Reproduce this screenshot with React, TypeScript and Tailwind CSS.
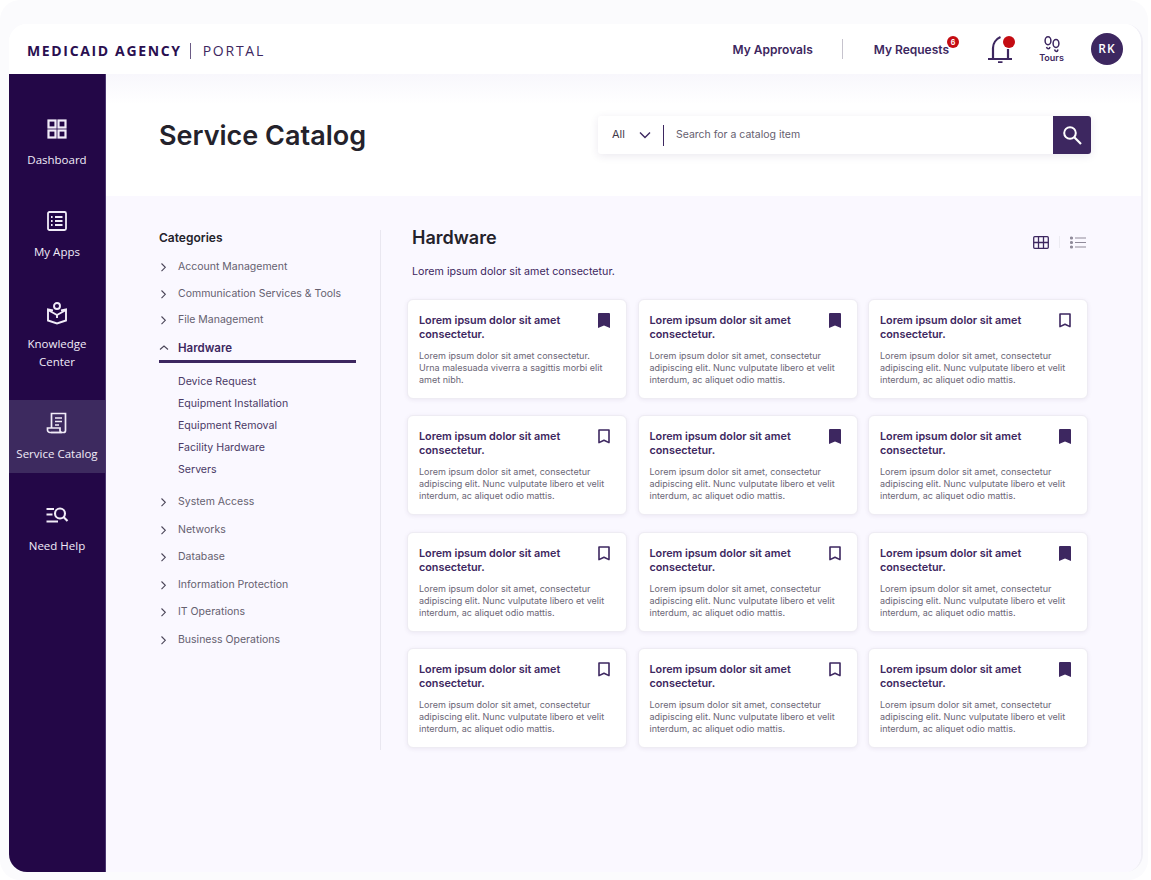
import React from "react";

const P = "#3d2760";

function Chevron({ up = false }: { up?: boolean }) {
  return (
    <svg width="10" height="10" viewBox="0 0 10 10" fill="none" stroke="#4a4558" strokeWidth="1.1" className="shrink-0">
      {up ? <path d="M1 6.5 5 3l4 3.5" /> : <path d="M2.500 1.500l3.800 3.800-3.800 3.800" />}
    </svg>
  );
}

function Bookmark({ filled }: { filled: boolean }) {
  return (
    <svg width="12" height="15" viewBox="0 0 12 15" className="-mt-[1px] shrink-0" fill={filled ? P : "none"} stroke={P} strokeWidth={filled ? 0 : 1.6}>
      {filled ? <path d="M0 1a1 1 0 0 1 1-1h10a1 1 0 0 1 1 1v14l-6-2.6L0 15z" /> : <path d="M1 1h10v12.600l-5-2.400-5 2.400z" strokeLinejoin="round" />}
    </svg>
  );
}

const iconProps = { width: 24, height: 24, viewBox: "0 0 24 24", fill: "none", stroke: "#f1ecf8", strokeWidth: 1.8 };

const navIcons: Record<string, React.ReactNode> = {
  Dashboard: (
    <svg {...iconProps} strokeWidth={2.2}>
      <rect x="3.500" y="3.500" width="7" height="7" />
      <rect x="13.500" y="3.500" width="7" height="7" />
      <rect x="3.500" y="13.500" width="7" height="7" />
      <rect x="13.500" y="13.500" width="7" height="7" />
    </svg>
  ),
  Apps: (
    <svg {...iconProps}>
      <rect x="3" y="3" width="18" height="18" rx="1.500" />
      <path d="M10 8h7.500M10 12h7.500M10 16h7.500" />
      <path d="M6 8h1.600M6 12h1.600M6 16h1.600" />
    </svg>
  ),
  Knowledge: (
    <svg {...iconProps} strokeWidth={1.900}>
      <circle cx="12" cy="5" r="3" />
      <path d="M8 9.500 3 8.500V19.500l9 3 9-3V8.500l-5 1" />
      <path d="M3 9l9 5 9-5M12 14v3" />
    </svg>
  ),
  Catalog: (
    <svg {...iconProps} strokeWidth={1.700}>
      <path d="M6.500 17V2.500h14V19.500a2 2 0 0 1-2 2H6" />
      <path d="M2.500 17h12.500v2.500a2 2 0 0 0 2 2H5a2.500 2.500 0 0 1-2.500-2.500z" />
      <path d="M10 7h7M10 10.500h7M10 14h4" />
    </svg>
  ),
  Help: (
    <svg {...iconProps}>
      <path d="M1.500 6H9M1.500 11.500h6M1.500 18.500H13" />
      <circle cx="15" cy="10.500" r="5" strokeWidth="2.100" />
      <path d="M18.500 14l4 4" strokeWidth="2.100" />
    </svg>
  ),
};

function NavItem({ icon, label, active = false }: { icon: string; label: React.ReactNode; active?: boolean }) {
  return (
    <div className={`flex min-h-[73px] w-[96px] flex-col items-center pt-[11px] pb-[10px] ${active ? "bg-[#3d2a5f]" : ""}`}>
      <div className="flex h-[24px] items-center justify-center">{navIcons[icon]}</div>
      <div className="mt-[10px] text-center font-['Open_Sans'] text-[11.500px] leading-[18px] text-[#f1ecf8]">{label}</div>
    </div>
  );
}

function Cat({ label, className }: { label: string; className: string }) {
  return (
    <div className={`flex items-center ${className}`}>
      <div className="flex w-[19px] justify-start">
        <Chevron />
      </div>
      <span className="text-[10.500px] leading-[16px] text-[#65606f]">{label}</span>
    </div>
  );
}

function Card({ first, filled }: { first?: boolean; filled: boolean }) {
  return (
    <div className="h-[100px] rounded-[6px] border border-[#eeecf3] bg-white pt-[14px] pr-[16px] pl-[11px] shadow-[0_1px_4px_rgba(61,39,96,0.08)]">
      <div className="flex items-start justify-between">
        <div className="w-[160px] text-[10.800px] leading-[14px] font-semibold text-[#3d2760]">Lorem ipsum dolor sit amet consectetur.</div>
        <Bookmark filled={filled} />
      </div>
      <p className="mt-[8px] text-[9px] leading-[12px] text-[#6b6676]">
        {first
          ? "Lorem ipsum dolor sit amet consectetur. Urna malesuada viverra a sagittis morbi elit amet nibh."
          : "Lorem ipsum dolor sit amet, consectetur adipiscing elit. Nunc vulputate libero et velit interdum, ac aliquet odio mattis."}
      </p>
    </div>
  );
}

const fills = [true, true, false, false, true, true, false, false, true, false, false, true];

export default function App() {
  return (
    <div className="h-[880px] w-[1151px] overflow-hidden bg-white font-['Inter','Liberation_Sans',sans-serif]">
      <div className="h-[880px] w-[1148px] rounded-[20px] bg-[#fbfbfd] pt-[24px] pl-[9px]">
        <div className="flex h-[848px] w-[1134px] flex-col overflow-hidden rounded-[18px] border-r-2 border-[#f0eff6] bg-white">
          <header className="flex h-[50px] shrink-0 items-center bg-white">
            <div className="ml-[18px] flex items-center pt-[4px] font-['Open_Sans'] text-[14px] leading-[20px] text-[#2a0f50]">
              <span className="font-bold tracking-[1.650px]">MEDICAID AGENCY</span>
              <span className="mr-[12px] ml-[8px] h-[16px] w-px bg-[#6b5b85]" />
              <span className="tracking-[1.750px] text-[#3d2760]">PORTAL</span>
            </div>
            <div className="ml-auto flex items-center pr-[18px] text-[12px] font-semibold text-[#3d2760]">
              <span className="translate-y-[1px]">My Approvals</span>
              <span className="mr-[31px] ml-[29px] h-[20px] w-px bg-[#c6c3cd]" />
              <div className="relative mr-[39px] translate-y-[1px]">
                My Requests
                <span className="absolute top-[-5px] right-[-10px] flex h-[12px] w-[12px] items-center justify-center rounded-full bg-[#c40c12] text-[7px] leading-none font-bold text-white">6</span>
              </div>
              <div className="relative mr-[26px] h-[28px] w-[25px]">
                <svg width="25" height="28" viewBox="0 0 25 28" fill="none" stroke={P} strokeWidth="2.200">
                  <path d="M0 24h24" />
                  <path d="M5 24V13c0-4.500 3-9 7.500-11M20 14v10" />
                  <path d="M10 27.500h4.500" strokeWidth="2.600" />
                </svg>
                <span className="absolute top-[1px] right-[-2px] h-[12px] w-[12px] rounded-full bg-[#c40c12]" />
              </div>
              <div className="mr-[27px] flex w-[25px] flex-col items-center">
                <svg width="18" height="17" viewBox="0 0 18 17" fill="none" stroke={P} strokeWidth="1.500">
                  <ellipse cx="5" cy="4.800" rx="2.900" ry="4" />
                  <path d="M3.500 11c.8 2.400 3 2.400 3.500 0" />
                  <ellipse cx="13" cy="7.500" rx="2.900" ry="4" />
                  <path d="M11.500 13.500c.8 2.600 3 2.600 3.500 0" />
                </svg>
                <span className="text-[9px] leading-[10px] font-semibold">Tours</span>
              </div>
              <div className="flex h-[32px] w-[32px] items-center justify-center rounded-full bg-[#3d2760] font-['Open_Sans'] text-[12px] font-semibold tracking-[1px] text-white">RK</div>
            </div>
          </header>

          <div className="flex min-h-0 flex-1">
            <aside className="flex w-[97px] shrink-0 flex-col gap-[19px] rounded-bl-[14px] border-r border-[#4b3670] bg-[#230747] pt-[32px]">
              <NavItem icon="Dashboard" label="Dashboard" />
              <NavItem icon="Apps" label="My Apps" />
              <NavItem icon="Knowledge" label={<>Knowledge<br />Center</>} />
              <NavItem icon="Catalog" label="Service Catalog" active />
              <NavItem icon="Help" label="Need Help" />
            </aside>

            <main className="flex min-w-0 flex-1 flex-col">
              <section className="flex h-[122px] shrink-0 items-center bg-gradient-to-b from-[#f8f7fc] to-white to-25% pr-[50px] pl-[53px]">
                <h1 className="translate-y-[1px] text-[27px] leading-[36px] font-semibold text-[#24222b]">Service Catalog</h1>
                <div className="ml-auto flex h-[38px] w-[493px] items-center rounded-[3px] bg-white shadow-[0_2px_8px_rgba(61,39,96,0.10)]">
                  <span className="ml-[14px] -translate-y-[1px] text-[11px] text-[#3f3a4a]">All</span>
                  <svg className="ml-[14px]" width="12" height="8" viewBox="0 0 12 8" fill="none" stroke="#3d2760" strokeWidth="1.400">
                    <path d="M1 1.500 6 6.500l5-5" />
                  </svg>
                  <span className="ml-[12px] h-[21px] w-px bg-[#3d2760]" />
                  <span className="ml-[12px] text-[10.500px] text-[#65606f]">Search for a catalog item</span>
                  <div className="ml-auto flex h-[38px] w-[38px] items-center justify-center rounded-r-[3px] bg-[#3d2760]">
                    <svg width="20" height="20" viewBox="0 0 20 20" fill="none" stroke="white" strokeWidth="2">
                      <circle cx="8" cy="8" r="5.800" />
                      <path d="M12.300 12.300 19 19" strokeWidth="2.200" />
                    </svg>
                  </div>
                </div>
              </section>

              <section className="flex flex-1 bg-[#faf8ff] pt-[34px] pl-[53px]">
                <div className="w-[197px] shrink-0">
                  <div className="text-[12px] leading-[16px] font-semibold text-[#24222b]">Categories</div>
                  <Cat label="Account Management" className="mt-[13px]" />
                  <Cat label="Communication Services & Tools" className="mt-[11px]" />
                  <Cat label="File Management" className="mt-[10px]" />
                  <div className="mt-[12px] flex items-center">
                    <div className="w-[19px]">
                      <Chevron up />
                    </div>
                    <span className="text-[11.500px] leading-[16px] font-semibold text-[#3d2760]">Hardware</span>
                  </div>
                  <div className="mt-[4px] h-[3px] w-[197px] bg-[#3d2760]" />
                  <div className="mt-[11px] flex flex-col gap-[6px] pl-[19px] text-[10.600px] leading-[16px] text-[#4a3a66]">
                    <span>Device Request</span>
                    <span>Equipment Installation</span>
                    <span>Equipment Removal</span>
                    <span>Facility Hardware</span>
                    <span>Servers</span>
                  </div>
                  <Cat label="System Access" className="mt-[16px]" />
                  <Cat label="Networks" className="mt-[11.500px]" />
                  <Cat label="Database" className="mt-[11.500px]" />
                  <Cat label="Information Protection" className="mt-[11.500px]" />
                  <Cat label="IT Operations" className="mt-[11.500px]" />
                  <Cat label="Business Operations" className="mt-[11.500px]" />
                </div>

                <div className="ml-[24px] h-[520px] w-px bg-[#e9e7f0]" />

                <div className="ml-[26px] w-[681px]">
                  <div className="flex items-center justify-between pl-[5px]">
                    <h2 className="text-[18px] leading-[16px] font-semibold text-[#24222b]">Hardware</h2>
                    <div className="flex translate-y-[4px] items-center gap-[10px] pr-[2px]">
                      <svg width="16" height="13" viewBox="0 0 16 13" fill="none" stroke={P} strokeWidth="1.300">
                        <rect x="0.700" y="0.700" width="14.600" height="11.600" rx="1" />
                        <path d="M5.500 1v11M10.500 1v11M1 6.500h14" />
                      </svg>
                      <span className="h-[12px] w-px bg-[#ecebf2]" />
                      <svg width="16" height="13" viewBox="0 0 16 13" fill="none" stroke="#8f8a9a" strokeWidth="1.200">
                        <path d="M5 2h11M5 6.500h11M5 11h11" />
                        <circle cx="1.500" cy="2" r="1" fill="#8f8a9a" />
                        <circle cx="1.500" cy="6.500" r="1" fill="#8f8a9a" />
                        <circle cx="1.500" cy="11" r="1" fill="#8f8a9a" />
                      </svg>
                    </div>
                  </div>
                  <p className="mt-[18px] pl-[5px] text-[10.700px] leading-[16px] text-[#3d2760]">Lorem ipsum dolor sit amet consectetur.</p>
                  <div className="mt-[19px] grid grid-cols-[220px_220px_220px] gap-x-[10.500px] gap-y-[16.400px]">
                    {fills.map((f, i) => (
                      <Card key={i} first={i === 0} filled={f} />
                    ))}
                  </div>
                </div>
              </section>
            </main>
          </div>
        </div>
      </div>
    </div>
  );
}
